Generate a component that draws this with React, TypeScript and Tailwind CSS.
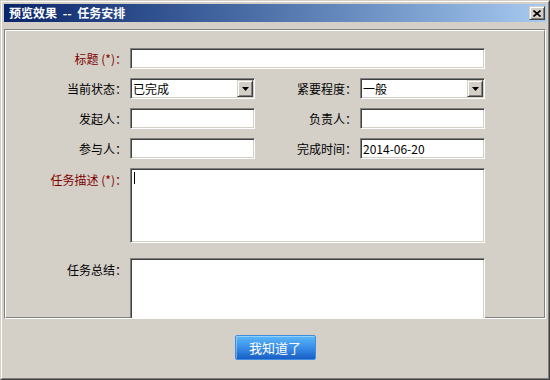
import React from "react";

const sunken =
  "border border-t-[#808080] border-l-[#808080] border-b-white border-r-white shadow-[inset_1px_1px_0_#404040,inset_-1px_-1px_0_#d4d0c8] bg-white";

const raised =
  "border border-t-[#d4d0c8] border-l-[#d4d0c8] border-b-[#404040] border-r-[#404040] shadow-[inset_1px_1px_0_#ffffff,inset_-1px_-1px_0_#808080] bg-[#d4d0c8]";

function Label({ text, required = false, wide = false, top = false }: { text: string; required?: boolean; wide?: boolean; top?: boolean }) {
  return (
    <div
      className={`${wide ? "w-[105px]" : "w-[124px]"} pr-[3px] text-right text-[12px] leading-[21px] whitespace-pre ${
        required ? "text-[#800000]" : "text-black"
      } ${top ? "pt-[1px]" : ""}`}
    >
      {text}
    </div>
  );
}

function Field({ value = "", wide = false }: { value?: string; wide?: boolean }) {
  return (
    <div className={`${sunken} ${wide ? "w-[355px]" : "w-[125px]"} h-[21px] pl-[2px] text-[12px] leading-[19px] text-black`}>
      {value}
    </div>
  );
}

function Select({ value }: { value: string }) {
  return (
    <div className={`${sunken} w-[125px] h-[21px] flex items-center p-[1px]`}>
      <div className="flex-1 pl-[1px] text-[12px] leading-[17px] text-black">{value}</div>
      <div className={`${raised} w-[16px] h-[17px] flex items-center justify-center`}>
        <svg width="7" height="4" viewBox="0 0 7 4">
          <polygon points="0,0 7,0 3.5,4" fill="#000" />
        </svg>
      </div>
    </div>
  );
}

function TextArea({ caret = false }: { caret?: boolean }) {
  return (
    <div className={`${sunken} w-[355px] h-[75px] shrink-0 pl-[3px] pt-[3px]`}>
      {caret && <span className="block w-px h-[12px] bg-black" />}
    </div>
  );
}

export default function App() {
  return (
    <div className="w-[550px] h-[380px] font-['Noto_Sans_CJK_SC','Noto_Sans',sans-serif] bg-[#d4d0c8] border border-t-[#d4d0c8] border-l-[#d4d0c8] border-b-[#404040] border-r-[#404040]">
      <div className="h-full border border-t-white border-l-white border-b-[#808080] border-r-[#808080] p-[2px] flex flex-col">
        {/* title bar */}
        <div className="h-[18px] shrink-0 flex items-center justify-between pl-[5px] pr-[1px] bg-linear-to-r from-[#0a246a] to-[#a6caf0]">
          <span className="text-white font-bold text-[12px] leading-[18px] whitespace-pre">
            预览效果 <span className="px-[3px]">--</span> 任务安排
          </span>
          <div className={`${raised} w-[16px] h-[14px] flex items-center justify-center`}>
            <svg width="8" height="7" viewBox="0 0 8 7">
              <path d="M0.5 0.5 L7.5 6.5 M7.5 0.5 L0.5 6.5" stroke="#000" strokeWidth="1.6" />
            </svg>
          </div>
        </div>

        {/* form panel */}
        <div className="mt-[7px] h-[290px] shrink-0 overflow-hidden border border-t-[#808080] border-l-[#808080] border-b-white border-r-white">
          <div className="h-full border border-t-white border-l-white border-b-[#808080] border-r-[#808080] pt-[17px]">
            <div className="flex items-center h-[21px] mb-[9px]">
              <Label text="标题 (*)：" required />
              <Field wide />
            </div>
            <div className="flex items-center h-[21px] mb-[9px]">
              <Label text="当前状态：" />
              <Select value="已完成" />
              <Label text="紧要程度：" wide />
              <Select value="一般" />
            </div>
            <div className="flex items-center h-[21px] mb-[9px]">
              <Label text="发起人：" />
              <Field />
              <Label text="负责人：" wide />
              <Field />
            </div>
            <div className="flex items-center h-[21px] mb-[9px]">
              <Label text="参与人：" />
              <Field />
              <Label text="完成时间：" wide />
              <Field value="2014-06-20" />
            </div>
            <div className="flex items-start mb-[15px]">
              <Label text="任务描述 (*)：" required top />
              <TextArea caret />
            </div>
            <div className="flex items-start">
              <Label text="任务总结：" top />
              <TextArea />
            </div>
          </div>
        </div>

        {/* footer */}
        <div className="flex-1 flex items-center justify-center">
          <button className="w-[81px] h-[25px] rounded-[2px] border border-[#3d8ee0] bg-linear-to-b from-[#5cb8f7] via-[#3a8ee8] to-[#1b5ec6] shadow-[inset_1px_1px_0_rgba(255,255,255,0.35)] text-white text-[13px] leading-[23px]">
            我知道了
          </button>
        </div>
      </div>
    </div>
  );
}
